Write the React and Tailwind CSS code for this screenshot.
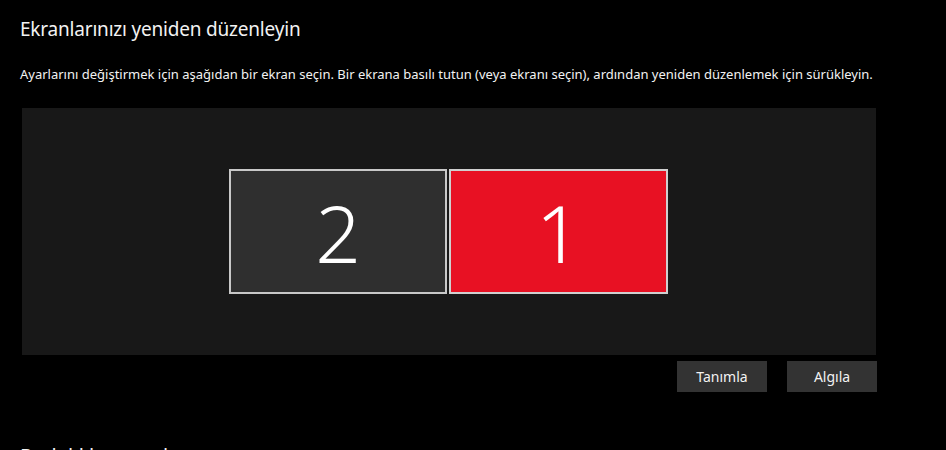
export default function App() {
  const font = { fontFamily: '"Noto Sans", "Open Sans", sans-serif' };
  return (
    <div
      className="w-[946px] h-[450px] overflow-hidden bg-black text-white pl-5"
      style={font}
    >
      <h1 className="pt-[15px] text-[19px] leading-[28px] font-normal tracking-[-0.2px] text-[#f2f2f2]">
        Ekranlarınızı yeniden düzenleyin
      </h1>
      <p className="mt-[22px] text-[13px] leading-[18px] text-[#f2f2f2]">
        Ayarlarını değiştirmek için aşağıdan bir ekran seçin. Bir ekrana basılı tutun (veya ekranı seçin), ardından yeniden düzenlemek için sürükleyin.
      </p>
      <div className="ml-[2px] mt-[25px] w-[854px] h-[247px] bg-[#181818] flex items-center pl-[207px] gap-[2px]">
        <div className="w-[218px] h-[125px] border-2 border-[#c8c8c8] bg-[#2f2f2f] flex items-center justify-center">
          <span className="text-[80px] leading-none font-light">2</span>
        </div>
        <div className="w-[219px] h-[125px] border-2 border-[#d0d0d0] bg-[#e81123] flex items-center justify-center">
          <span className="text-[80px] leading-none font-light">1</span>
        </div>
      </div>
      <div className="w-[857px] mt-[6px] flex justify-end gap-5">
        <button className="w-[90px] h-[31px] bg-[#333333] text-[14px] text-[#f2f2f2]">
          Tanımla
        </button>
        <button className="w-[90px] h-[31px] bg-[#333333] text-[14px] text-[#f2f2f2]">
          Algıla
        </button>
      </div>
      <h2 className="mt-[50px] text-[20px] leading-[28px] font-normal text-[#f2f2f2]">
        Parlaklık ve renk
      </h2>
    </div>
  );
}
